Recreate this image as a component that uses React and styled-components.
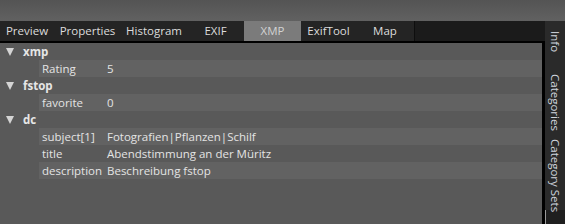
import styled, { createGlobalStyle } from 'styled-components'

const GlobalStyle = createGlobalStyle`
  html, body {
    margin: 0;
    padding: 0;
    background: #595959;
  }
  body {
    font-family: 'Open Sans', 'Noto Sans', sans-serif;
    font-size: 11.5px;
  }
`

const tabs = [
  { label: 'Preview', width: 54 },
  { label: 'Properties', width: 67 },
  { label: 'Histogram', width: 66 },
  { label: 'EXIF', width: 57 },
  { label: 'XMP', width: 57, active: true },
  { label: 'ExifTool', width: 55 },
  { label: 'Map', width: 59 },
]

const sideTabs = [
  { label: 'Info', height: 42 },
  { label: 'Categories', height: 78 },
  { label: 'Category Sets', height: 69 },
]

const groups = [
  { name: 'xmp', items: [['Rating', '5']] },
  { name: 'fstop', items: [['favorite', '0']] },
  {
    name: 'dc',
    items: [
      ['subject[1]', 'Fotografien|Pflanzen|Schilf'],
      ['title', 'Abendstimmung an der Müritz'],
      ['description', 'Beschreibung fstop'],
    ],
  },
]

const App = () => {
  let row = 0

  return (
    <>
      <GlobalStyle />
      <Window>
        <TopStrip />
        <Body>
          <TabWidget>
            <TabBar>
              {tabs.map((t, k) => (
                <Tab
                  key={k}
                  $width={t.width}
                  $active={t.active}
                  $last={k === tabs.length - 1}
                >
                  {t.label}
                </Tab>
              ))}
            </TabBar>
            <Pane>
              {groups.map((g) => {
                row++
                return (
                  <Group key={g.name}>
                    <GroupHeader>
                      <Arrow />
                      <GroupName>{g.name}</GroupName>
                    </GroupHeader>
                    {g.items.map(([key, value]) => {
                      const alt = row % 2 === 1
                      row++
                      return (
                        <ItemRow key={key} $alt={alt}>
                          <Key>{key}</Key>
                          <Value>{value}</Value>
                        </ItemRow>
                      )
                    })}
                  </Group>
                )
              })}
            </Pane>
          </TabWidget>
          <SideBar>
            {sideTabs.map((t) => (
              <SideTab key={t.label} $height={t.height}>
                <SideLabel>{t.label}</SideLabel>
              </SideTab>
            ))}
            <SideFill />
          </SideBar>
        </Body>
      </Window>
    </>
  )
}

const Window = styled.div`
  width: 565px;
  height: 224px;
  display: flex;
  flex-direction: column;
  overflow: hidden;
  color: #e4e4e4;
`

const TopStrip = styled.div`
  height: 21px;
  flex: none;
  background: linear-gradient(#545454, #616161);
`

const Body = styled.div`
  flex: 1;
  display: flex;
  min-height: 0;
`

const TabWidget = styled.div`
  width: 545px;
  display: flex;
  flex-direction: column;
  background: #1b1b1b;
`

const TabBar = styled.div`
  height: 20px;
  flex: none;
  display: flex;
`

const Tab = styled.div`
  width: ${(p) => p.$width}px;
  box-sizing: border-box;
  display: flex;
  align-items: center;
  justify-content: center;
  padding-bottom: 1px;
  background: ${(p) => (p.$active ? '#7b7b7b' : '#242424')};
  color: ${(p) => (p.$active ? '#d2d2d2' : '#dcdcdc')};
  border-right: ${(p) => (p.$last ? '1px solid #0e0e0e' : 'none')};
  white-space: nowrap;
`

const Pane = styled.div`
  flex: 1;
  background: #595959;
  border-top: 2px solid #000;
  border-right: 3px solid #000;
  margin-right: 0;
`

const Group = styled.div`
  display: flex;
  flex-direction: column;
`

const GroupHeader = styled.div`
  height: 17px;
  display: flex;
  align-items: center;
`

const Arrow = styled.span`
  width: 0;
  height: 0;
  margin: 0 9px 0 6px;
  border-left: 4px solid transparent;
  border-right: 4px solid transparent;
  border-top: 8px solid #d4d4d4;
`

const GroupName = styled.span`
  font-weight: 700;
  color: #e6e6e6;
`

const ItemRow = styled.div`
  height: 17px;
  margin-left: 39px;
  display: flex;
  align-items: center;
  background: ${(p) => (p.$alt ? '#626262' : 'transparent')};
`

const Key = styled.span`
  width: 65px;
  padding-left: 3px;
  flex: none;
  white-space: nowrap;
`

const Value = styled.span`
  white-space: nowrap;
`

const SideBar = styled.div`
  width: 20px;
  display: flex;
  flex-direction: column;
  background: #1f1f1f;
`

const SideTab = styled.div`
  height: ${(p) => p.$height}px;
  flex: none;
  display: flex;
  align-items: center;
  justify-content: center;
  background: #2a2a2a;
`

const SideLabel = styled.span`
  writing-mode: vertical-rl;
  color: #cfd4dc;
  white-space: nowrap;
  line-height: 1;
`

const SideFill = styled.div`
  flex: 1;
  border-left: 1px solid #9a9a9a;
`

export default App
